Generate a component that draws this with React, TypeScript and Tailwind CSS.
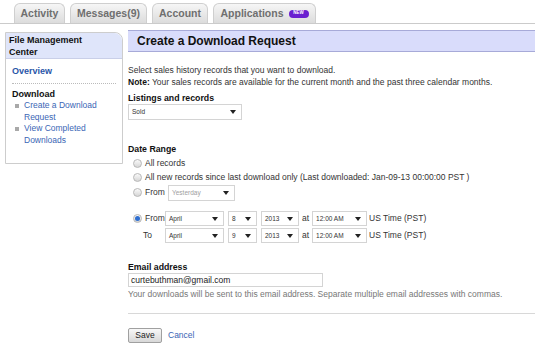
import React from 'react';

// Small dropdown arrow used by every fake select
function Arrow() {
  return (
    <svg width="6" height="4" viewBox="0 0 6 4" className="shrink-0">
      <path d="M0 0 L6 0 L3 4 Z" fill="#222" />
    </svg>
  );
}

function Select({ value, w, disabled = false, h = 'h-[15px]' }: { value: string; w: string; disabled?: boolean; h?: string }) {
  return (
    <div className={`${w} ${h} flex items-center justify-between border border-[#d4d4d4] bg-white pl-[3px] pr-[5px]`}>
      <span className={`text-[6.5px] ${disabled ? 'text-[#a0a0a0]' : 'text-[#333]'}`}>{value}</span>
      <Arrow />
    </div>
  );
}

function Radio({ checked = false }: { checked?: boolean }) {
  return (
    <span className="w-[9px] h-[9px] rounded-full border border-[#b8b8b8] bg-linear-to-b from-[#fafafa] to-[#d6d6d6] flex items-center justify-center shrink-0">
      {checked && <span className="w-[5px] h-[5px] rounded-full bg-[#2f6fd1]" />}
    </span>
  );
}

function Tab({ label, w, badge = false }: { label: string; w: string; badge?: boolean }) {
  return (
    <div className={`${w} h-[20px] flex items-center justify-center gap-[5px] rounded-t-[6px] border border-b-0 border-[#cfcfcf] bg-linear-to-b from-[#f6f6f6] to-[#dcdcdc]`}>
      <span className="text-[10.5px] font-bold text-[#6f6f6f]">{label}</span>
      {badge && (
        <span className="w-[20px] h-[8px] rounded-full bg-[#6a1fd0] text-white text-[4.5px] font-bold flex items-center justify-center leading-none">
          NEW
        </span>
      )}
    </div>
  );
}

function SideLink({ children }: { children: React.ReactNode }) {
  return (
    <div className="flex items-start gap-[5px] pl-[3px]">
      <span className="w-[4px] h-[4px] bg-[#a9a9a9] mt-[4px] shrink-0" />
      <span className="text-[8.5px] leading-[11.5px] text-[#3a66b5]">{children}</span>
    </div>
  );
}

function DateRow({ label, month, day, radio }: { label: string; month: string; day: string; radio?: boolean }) {
  return (
    <div className="flex items-center h-[15px]">
      <div className="w-[37px] flex items-center pl-[5px] gap-[3px]">
        {radio ? <Radio checked /> : <span className="w-[7px]" />}
        <span className="text-[8.5px] text-[#333]">{label}</span>
      </div>
      <Select value={month} w="w-[59px]" />
      <div className="w-[4px]" />
      <Select value={day} w="w-[29px]" />
      <div className="w-[4px]" />
      <Select value="2013" w="w-[38px]" />
      <span className="text-[8.5px] text-[#333] px-[3px]">at</span>
      <Select value="12:00 AM" w="w-[55px]" />
      <span className="text-[8.5px] text-[#333] pl-[2px]">US Time (PST)</span>
    </div>
  );
}

export default function App() {
  return (
    <div className="w-[535px] h-[347px] bg-white overflow-hidden font-['Liberation_Sans',Arial,sans-serif] text-[#333]">
      {/* tabs */}
      <div className="h-[24px] flex items-end gap-[5px] pl-[14px] border-b border-[#cbcbcb]">
        <Tab label="Activity" w="w-[51px]" />
        <Tab label="Messages(9)" w="w-[77px]" />
        <Tab label="Account" w="w-[56px]" />
        <Tab label="Applications" w="w-[103px]" badge />
      </div>

      <div className="flex">
        {/* sidebar */}
        <div className="ml-[5px] mt-[8px] w-[118px] h-[132px] border border-[#cdcdcd] rounded-tr-[8px] flex flex-col">
          <div className="h-[26px] bg-[#dfe5fa] border-b border-[#c9cfe8] rounded-tr-[8px] pl-[3px] pt-[1px] text-[9px] leading-[12px] font-bold text-[#111]">
            File Management
            <br />
            Center
          </div>
          <div className="px-[6px] pt-[7px]">
            <div className="text-[9px] font-bold leading-[11px] text-[#2a56a8]">Overview</div>
          </div>
          <div className="mx-[6px] mt-[6px] border-t border-dotted border-[#bbb]" />
          <div className="px-[6px] pt-[5px]">
            <div className="text-[9px] font-bold leading-[11px] text-[#111]">Download</div>
            <SideLink>
              Create a Download
              <br />
              Request
            </SideLink>
            <SideLink>
              View Completed
              <br />
              Downloads
            </SideLink>
          </div>
        </div>

        {/* main */}
        <div className="ml-[5px] mt-[6px] flex-1">
          <div className="h-[22px] bg-[#d9dcfb] border-y border-[#a7aad8] flex items-center pl-[9px]">
            <span className="text-[12px] font-bold text-[#111]">Create a Download Request</span>
          </div>

          <div className="text-[8.5px] leading-[12px] mt-[12px]">
            Select sales history records that you want to download.
          </div>
          <div className="text-[8.5px] leading-[12px]">
            <span className="font-bold text-[#111]">Note:</span> Your sales records are available for the current month and the past three calendar months.
          </div>

          <div className="text-[8.75px] font-bold leading-[11px] mt-[5px] text-[#111]">Listings and records</div>
          <Select value="Sold" w="w-[114px]" h="h-[16px]" />

          <div className="text-[8.75px] font-bold leading-[12px] mt-[23px] text-[#111]">Date Range</div>
          <div className="flex flex-col pl-[5px] mt-[1px]">
            <div className="h-[14px] flex items-center gap-[3px]">
              <Radio />
              <span className="text-[8.5px]">All records</span>
            </div>
            <div className="h-[14px] flex items-center gap-[3px]">
              <Radio />
              <span className="text-[8.5px]">All new records since last download only (Last downloaded: Jan-09-13 00:00:00 PST )</span>
            </div>
            <div className="h-[17px] flex items-center gap-[3px]">
              <Radio />
              <span className="text-[8.5px] w-[20px]">From</span>
              <Select value="Yesterday" w="w-[67px]" h="h-[16px]" disabled />
            </div>
          </div>

          <div className="mt-[10px] flex flex-col gap-[2px]">
            <DateRow label="From" month="April" day="8" radio />
            <DateRow label="To" month="April" day="9" />
          </div>

          <div className="text-[8.75px] font-bold leading-[12px] mt-[18px] text-[#111]">Email address</div>
          <div className="w-[195px] h-[14px] border border-[#d4d4d4] flex items-center pl-[2px] text-[8.5px] text-[#222]">
            curtebuthman@gmail.com
          </div>
          <div className="text-[8.5px] leading-[12px] mt-[1px] text-[#777]">
            Your downloads will be sent to this email address. Separate multiple email addresses with commas.
          </div>

          <div className="mt-[13px] border-t border-[#d8d8d8]" />

          <div className="mt-[14px] flex items-center gap-[6px]">
            <button className="w-[34px] h-[15px] border border-[#a0a0a0] rounded-[2px] bg-linear-to-b from-[#f8f8f8] to-[#d8d8d8] text-[8.5px] text-[#222] flex items-center justify-center">
              Save
            </button>
            <span className="text-[8.5px] text-[#3a66b5]">Cancel</span>
          </div>
        </div>
      </div>
    </div>
  );
}
